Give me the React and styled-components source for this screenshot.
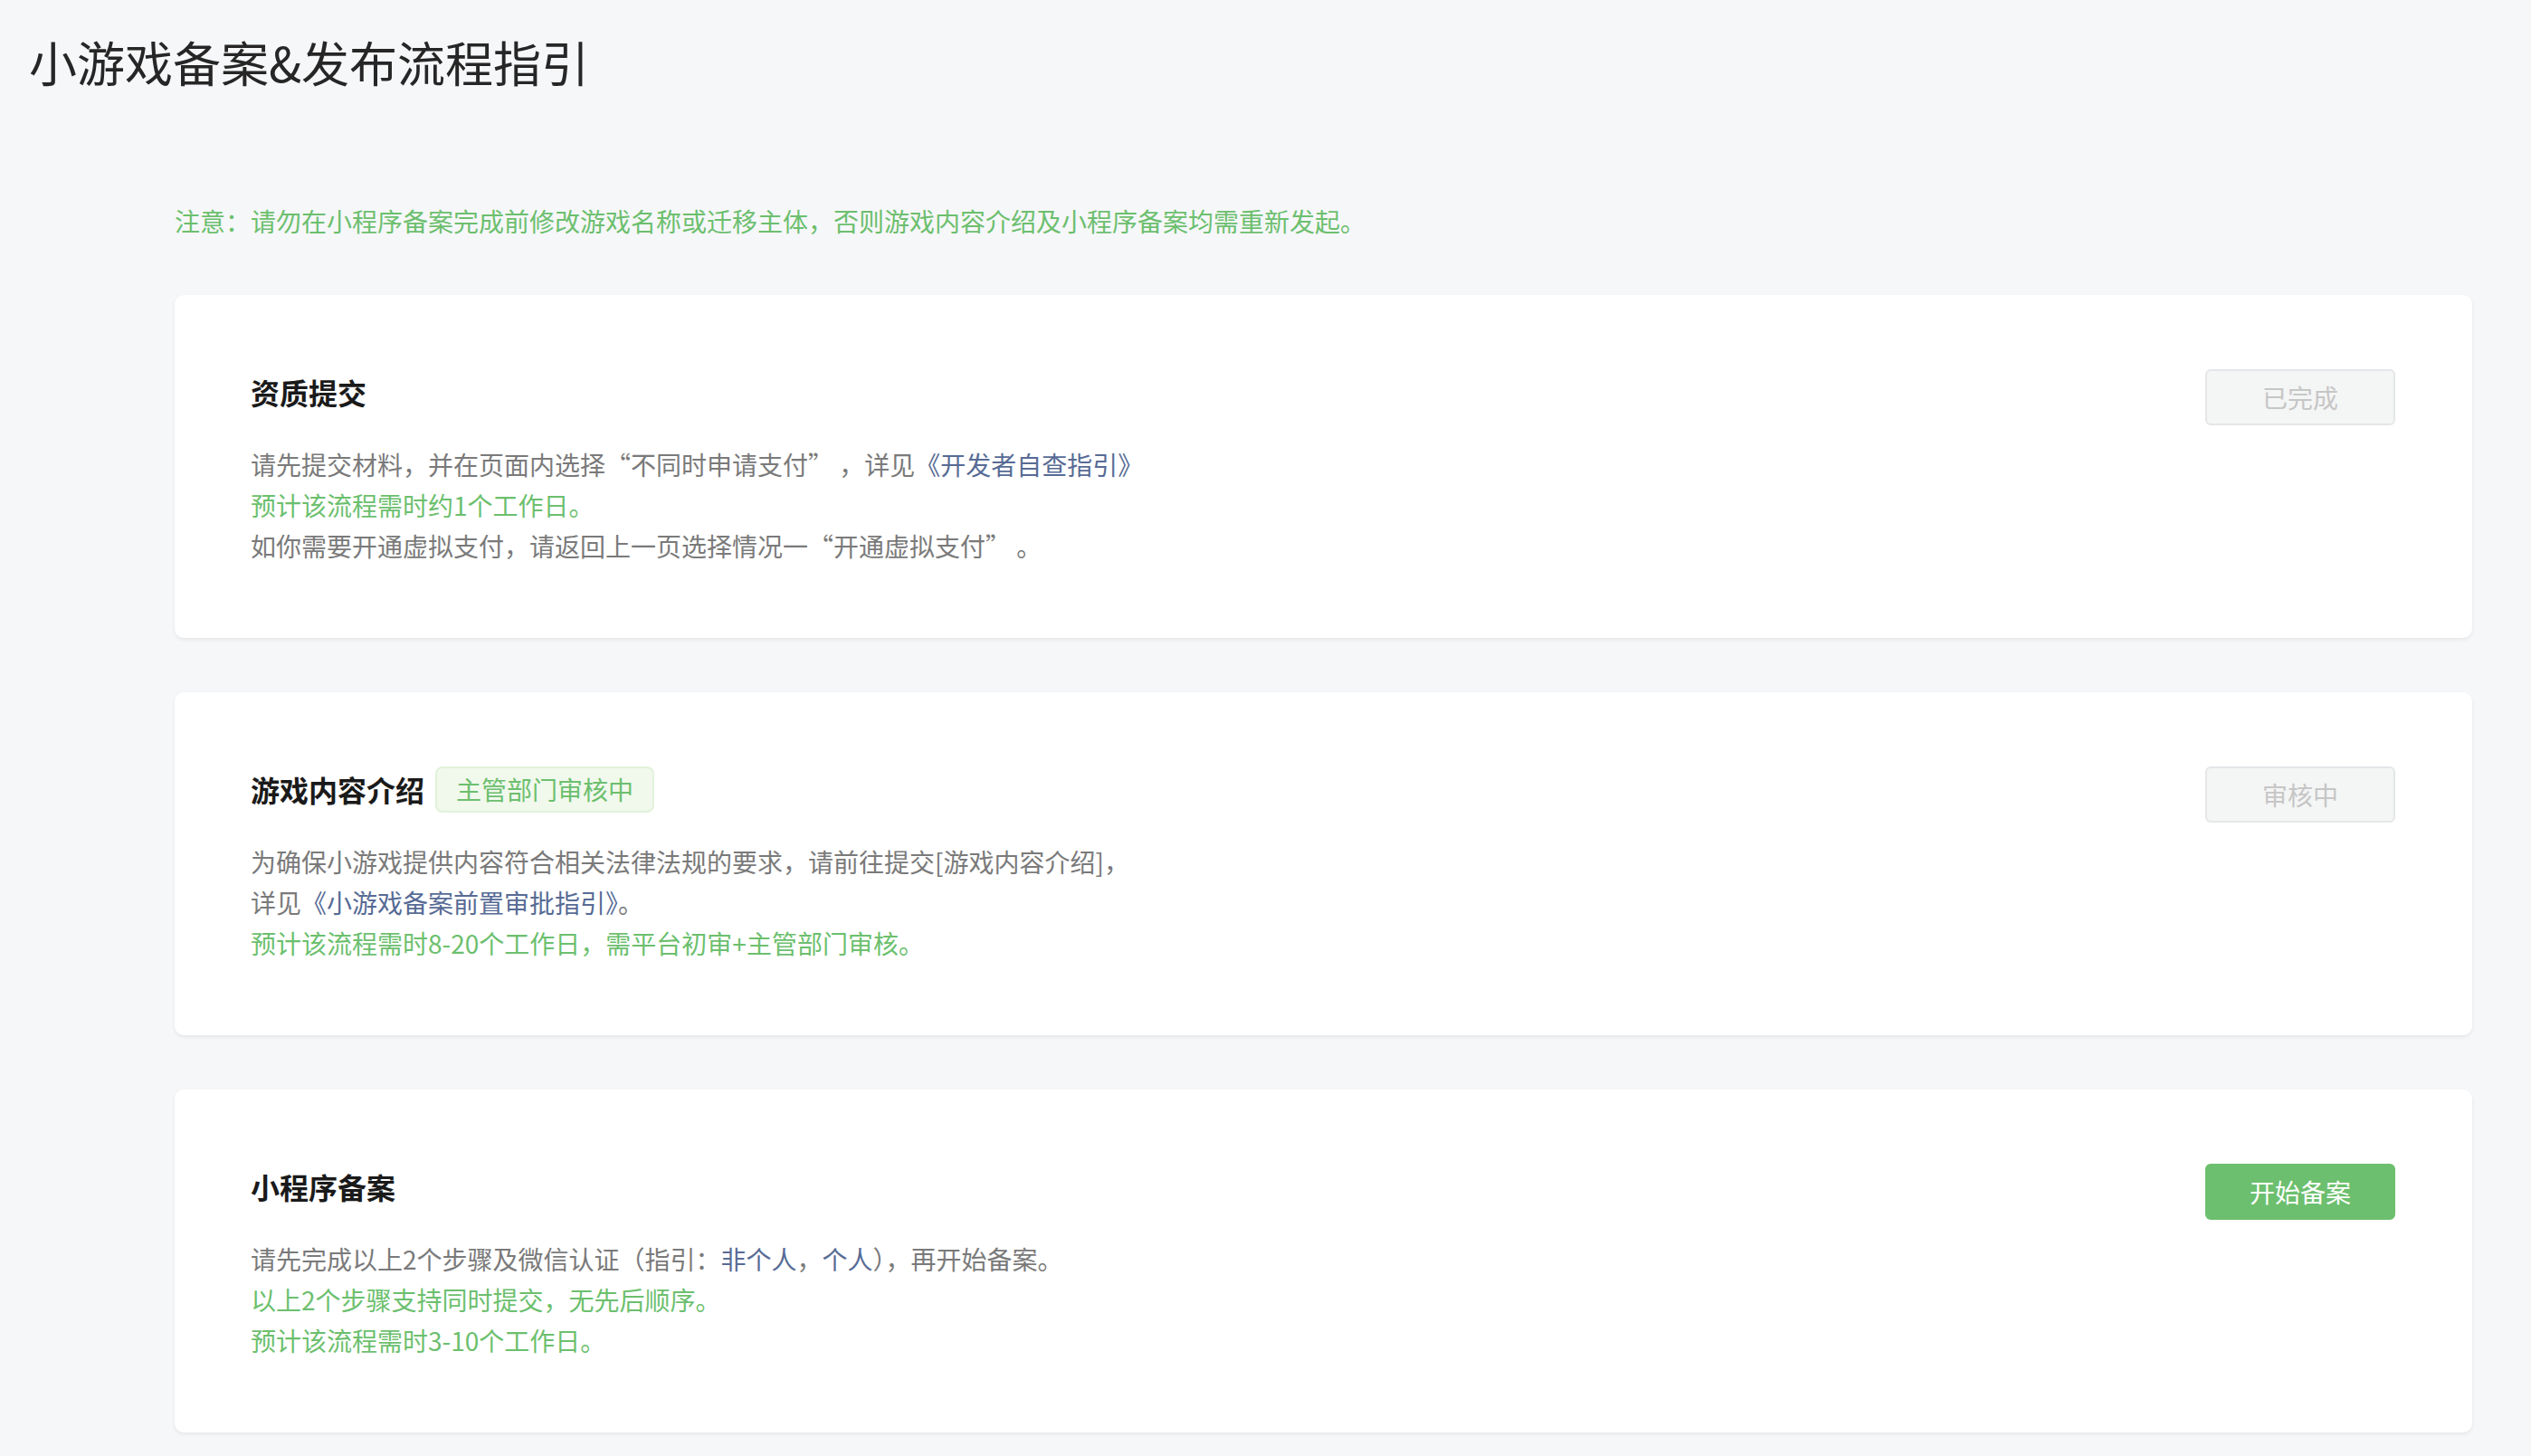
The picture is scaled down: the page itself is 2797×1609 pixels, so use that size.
import React from 'react';
import styled, { createGlobalStyle } from 'styled-components';

const GlobalStyle = createGlobalStyle`
  html, body {
    margin: 0;
    padding: 0;
    background: #f6f7f9;
  }
  body {
    font-family: "Noto Sans CJK SC", "Noto Sans", sans-serif;
  }
`;

const Page = styled.div`
  min-height: 1609px;
  box-sizing: border-box;
  padding: 31px 65px 20px 32px;
  background: #f6f7f9;
`;

const Title = styled.h1`
  margin: 0;
  font-size: 53px;
  line-height: 74px;
  font-weight: 400;
  color: #262626;
`;

const Content = styled.div`
  padding-left: 161px;
  margin-top: 119px;
`;

const Notice = styled.p`
  margin: 0 0 62px;
  font-size: 28px;
  line-height: 40px;
  color: #6cbf6e;
`;

const CardList = styled.div`
  display: flex;
  flex-direction: column;
  gap: 60px;
`;

const Card = styled.section`
  background: #fff;
  border-radius: 10px;
  box-shadow: 0 2px 4px rgba(0, 0, 0, 0.07);
  padding: 82px 85px 78px 84px;
  height: 379px;
  box-sizing: border-box;
`;

const CardHead = styled.div`
  display: flex;
  align-items: center;
  justify-content: space-between;
  height: 62px;
`;

const HeadLeft = styled.div`
  display: flex;
  align-items: center;
  gap: 12px;
  margin-top: -12px;
`;

const CardTitle = styled.h2`
  margin: 0;
  font-size: 32px;
  line-height: 44px;
  font-weight: 700;
  color: #1a1a1a;
`;

const Tag = styled.span`
  display: inline-flex;
  align-items: center;
  height: 51px;
  box-sizing: border-box;
  padding: 0 21px;
  border: 2px solid #e2f2da;
  border-radius: 8px;
  background: #f1f8ec;
  color: #6cbf6e;
  font-size: 28px;
`;

const Button = styled.button`
  width: 210px;
  height: 62px;
  border-radius: 6px;
  font-family: inherit;
  font-size: 28px;
  cursor: ${(p) => (p.$primary ? 'pointer' : 'default')};
  border: 2px solid ${(p) => (p.$primary ? '#6cbf6e' : '#e4e6e9')};
  background: ${(p) => (p.$primary ? '#6cbf6e' : '#f4f5f5')};
  color: ${(p) => (p.$primary ? '#fff' : '#c6c6c6')};
`;

const Body = styled.div`
  margin-top: 21px;
`;

const Line = styled.p`
  margin: 0;
  font-size: 28px;
  line-height: 45px;
  color: ${(p) => (p.$green ? '#6cbf6e' : '#7a7a7a')};
`;

const Link = styled.a`
  color: #576b95;
  text-decoration: none;
`;

function StepCard({ title, tag, button, primary, children }) {
  return (
    <Card>
      <CardHead>
        <HeadLeft>
          <CardTitle>{title}</CardTitle>
          {tag && <Tag>{tag}</Tag>}
        </HeadLeft>
        <Button $primary={primary} disabled={!primary}>{button}</Button>
      </CardHead>
      <Body>{children}</Body>
    </Card>
  );
}

function App() {
  return (
    <Page>
      <GlobalStyle />
      <Title>小游戏备案&amp;发布流程指引</Title>
      <Content>
        <Notice>注意：请勿在小程序备案完成前修改游戏名称或迁移主体，否则游戏内容介绍及小程序备案均需重新发起。</Notice>
        <CardList>
          <StepCard title="资质提交" button="已完成">
            <Line>
              请先提交材料，并在页面内选择“不同时申请支付” ，详见<Link href="#">《开发者自查指引》</Link>
            </Line>
            <Line $green>预计该流程需时约1个工作日。</Line>
            <Line>如你需要开通虚拟支付，请返回上一页选择情况一“开通虚拟支付” 。</Line>
          </StepCard>
          <StepCard title="游戏内容介绍" tag="主管部门审核中" button="审核中">
            <Line>为确保小游戏提供内容符合相关法律法规的要求，请前往提交[游戏内容介绍]，</Line>
            <Line>
              详见<Link href="#">《小游戏备案前置审批指引》</Link>。
            </Line>
            <Line $green>预计该流程需时8-20个工作日，需平台初审+主管部门审核。</Line>
          </StepCard>
          <StepCard title="小程序备案" button="开始备案" primary>
            <Line>
              请先完成以上2个步骤及微信认证（指引：<Link href="#">非个人</Link>，<Link href="#">个人</Link>），再开始备案。
            </Line>
            <Line $green>以上2个步骤支持同时提交，无先后顺序。</Line>
            <Line $green>预计该流程需时3-10个工作日。</Line>
          </StepCard>
        </CardList>
      </Content>
    </Page>
  );
}

export default App;
